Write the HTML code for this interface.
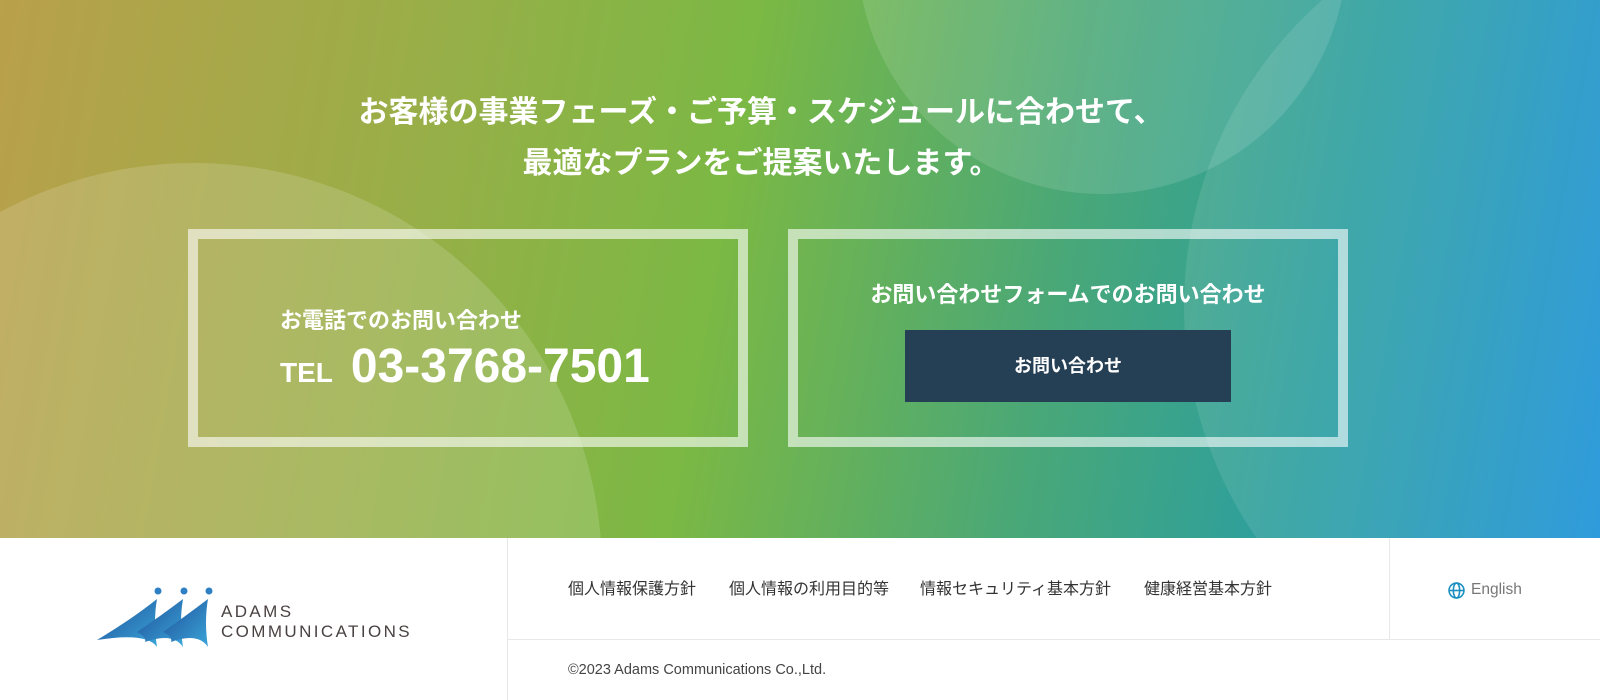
<!DOCTYPE html>
<html><head><meta charset="utf-8">
<style>
*{margin:0;padding:0;box-sizing:border-box}
html,body{width:1600px;height:700px;overflow:hidden}
body{background:#fff;font-family:"Liberation Sans","Noto Sans CJK JP",sans-serif;position:relative}
.hero{position:absolute;left:0;top:0;width:1600px;height:538px;overflow:hidden;
background:linear-gradient(100deg,#b9a04a 0%,#9aae48 25%,#7bb844 45%,#4aa877 65%,#2a9ea0 82%,#1890d8 100%)}
.c{position:absolute;border-radius:50%}
.h{position:absolute;left:0;width:1522px;text-align:center;color:#fff;font-weight:bold;font-size:30px;white-space:nowrap}
.box{position:absolute;top:229px;width:560px;height:218px;border:10px solid rgba(255,255,255,.6)}
.abs{position:absolute;white-space:nowrap}
</style></head><body>
<div class="hero">
 <div class="c" style="left:-214px;top:163px;width:816px;height:816px;background:rgba(255,255,255,.15)"></div>
 <div class="c" style="left:857px;top:-296px;width:490px;height:490px;background:rgba(255,255,255,.12)"></div>
 <div class="c" style="left:1184px;top:-102px;width:816px;height:816px;background:rgba(255,255,255,.1)"></div>
 <div class="h" style="top:94px;line-height:38px">お客様の事業フェーズ・ご予算・スケジュールに合わせて、</div>
 <div class="h" style="top:145px;line-height:38px">最適なプランをご提案いたします。</div>
 <div class="box" style="left:188px">
   <div class="abs" style="left:82px;top:64px;font-size:22px;font-weight:bold;color:#fff">お電話でのお問い合わせ</div>
   <div class="abs" style="left:82px;top:100px;color:#fff;font-weight:bold"><span style="font-size:28px">TEL</span><span style="font-size:48px;margin-left:18px">03-3768-7501</span></div>
 </div>
 <div class="box" style="left:788px">
   <div class="abs" style="left:0;width:540px;text-align:center;top:38px;font-size:22px;font-weight:bold;color:#fff">お問い合わせフォームでのお問い合わせ</div>
   <div class="abs" style="left:107px;top:91px;width:326px;height:72px;background:#253f54;color:#fff;font-size:18px;font-weight:bold;text-align:center;line-height:72px">お問い合わせ</div>
 </div>
</div>
<div style="position:absolute;left:507px;top:538px;width:1px;height:162px;background:#e8e8e8"></div>
<div style="position:absolute;left:1389px;top:538px;width:1px;height:101px;background:#e8e8e8"></div>
<div style="position:absolute;left:508px;top:639px;width:1092px;height:1px;background:#e8e8e8"></div>
<svg style="position:absolute;left:97px;top:587px" width="130" height="64" viewBox="0 0 130 64">
 <defs><linearGradient id="g" x1="0" y1="0" x2="1" y2="1"><stop offset="0" stop-color="#1f4f9a"/><stop offset="1" stop-color="#3aa5d8"/></linearGradient></defs>
 <circle cx="61" cy="4" r="3.5" fill="#2f7fc4"/><circle cx="87" cy="4" r="3.5" fill="#2f7fc4"/><circle cx="112" cy="4" r="3.5" fill="#2f7fc4"/>
 <path d="M0 53 Q35 32 60 12 Q56 35 60 60 Q50 45 0 53Z" fill="url(#g)"/>
 <path d="M40 45 Q65 28 86 12 Q82 35 86 60 Q76 45 48 55 Q50 50 40 45Z" fill="url(#g)"/>
 <path d="M66 45 Q90 28 111 12 Q107 35 111 60 Q101 45 74 55 Q76 50 66 45Z" fill="url(#g)"/>
</svg>
<div class="abs" style="left:221px;top:602px;font-size:17px;color:#4a4242;letter-spacing:2.4px;line-height:20px">ADAMS<br>COMMUNICATIONS</div>
<div class="abs" style="left:568px;top:580px;font-size:16px;color:#333;line-height:20px">個人情報保護方針</div>
<div class="abs" style="left:729px;top:580px;font-size:16px;color:#333;line-height:20px">個人情報の利用目的等</div>
<div class="abs" style="left:920px;top:580px;font-size:16px;color:#333;line-height:20px">情報セキュリティ基本方針</div>
<div class="abs" style="left:1144px;top:580px;font-size:16px;color:#333;line-height:20px">健康経営基本方針</div>
<svg style="position:absolute;left:1448px;top:582px" width="17" height="17" viewBox="0 0 16 16" fill="none" stroke="#1a8fc0" stroke-width="1.5"><circle cx="8" cy="8" r="7"/><ellipse cx="8" cy="8" rx="3" ry="7"/><path d="M1 8h14"/></svg>
<div class="abs" style="left:1471px;top:580px;font-size:15.5px;color:#777;line-height:20px">English</div>
<div class="abs" style="left:568px;top:661px;font-size:14.5px;color:#444;line-height:18px">©2023 Adams Communications Co.,Ltd.</div>
</body></html>
